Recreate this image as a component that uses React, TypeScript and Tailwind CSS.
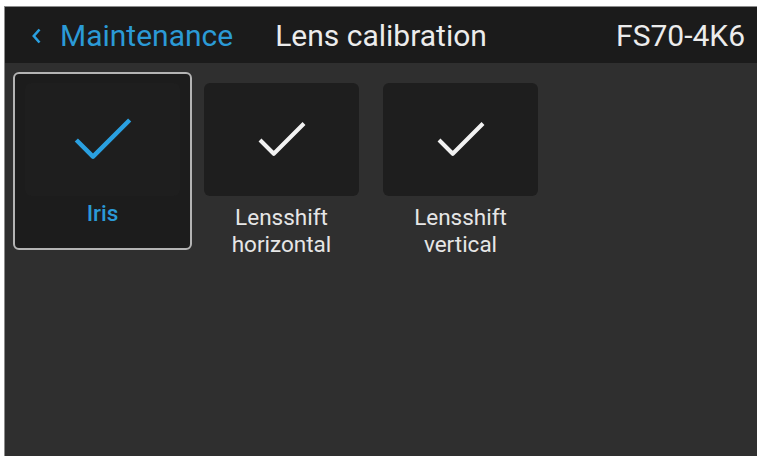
import React from 'react';
import { Check } from 'lucide-react';

type Item = { label: string[]; active?: boolean };

const items: Item[] = [
    { label: ['Iris'], active: true },
    { label: ['Lensshift', 'horizontal'] },
    { label: ['Lensshift', 'vertical'] },
];

const Tile: React.FC<{ item: Item }> = ({ item }) => {
    return (
        <div
            className={`w-[179px] h-[178px] flex flex-col items-center pt-[9px] rounded-md border-2 ${
                item.active ? 'border-[#b4b4b4] bg-[#1c1c1c]' : 'border-transparent'
            }`}
        >
            <div className="w-[155px] h-[113px] shrink-0 rounded-md bg-[#1e1e1e] flex items-center justify-center">
                {item.active ? (
                    <Check size={80} strokeWidth={1.35} color="#2aa0e0" strokeLinecap="butt" />
                ) : (
                    <Check size={66} strokeWidth={1.5} color="#f2f2f2" strokeLinecap="butt" />
                )}
            </div>
            <div
                className={`text-center text-[22.5px] leading-[27px] whitespace-nowrap ${
                    item.active ? 'mt-[4px] text-[#2b9ad6] font-medium' : 'mt-[8px] text-[#e6e6e6]'
                }`}
            >
                {item.label.map((l) => (
                    <div key={l}>{l}</div>
                ))}
            </div>
        </div>
    );
};

const App: React.FC = () => {
    return (
        <div className="w-[757px] h-[456px] bg-white pt-[6px] pl-[4px] overflow-hidden font-['Roboto',sans-serif]">
            <div className="w-full h-full flex flex-col border-l border-t border-[#8c8c8c] bg-[#2f2f2f]">
                {/* Header bar */}
                <div className="h-[56px] shrink-0 bg-[#1b1b1b] flex items-center pl-[27px] pr-[12px] text-[30px]">
                    <svg width="9" height="16" viewBox="0 0 9 16" fill="none" className="mt-[1px]">
                        <polyline points="7.5,1.5 1.8,8 7.5,14.5" stroke="#2aa0e0" strokeWidth="2.6" />
                    </svg>
                    <span className="ml-[19px] text-[#2b9ad6]">Maintenance</span>
                    <span className="ml-[42px] text-[#ececec]">Lens calibration</span>
                    <span className="ml-auto text-[#ececec]">FS70-4K6</span>
                </div>

                {/* Calibration tiles */}
                <div className="flex pt-[9px] pl-[8px]">
                    {items.map((item) => (
                        <Tile key={item.label.join(' ')} item={item} />
                    ))}
                </div>
            </div>
        </div>
    );
};

export default App;
